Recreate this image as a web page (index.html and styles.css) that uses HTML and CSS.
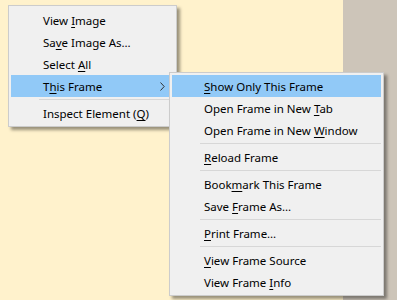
FILE: index.html
```html
<!DOCTYPE html>
<html lang="en">
<head>
  <meta charset="UTF-8">
  <meta name="viewport" content="width=device-width, initial-scale=1.0">
  <title>Context menu</title>
  <link rel="stylesheet" href="styles.css">
</head>
<body>
  <div class="page"></div>
  <div class="side"></div>

  <ul class="menu main-menu">
    <li class="item"><span class="label">View <u>I</u>mage</span></li>
    <li class="item"><span class="label">Sa<u>v</u>e Image As…</span></li>
    <li class="item"><span class="label">Select <u>A</u>ll</span></li>
    <li class="item active">
      <span class="label">T<u>h</u>is Frame</span>
      <svg class="arrow" width="5" height="9" viewBox="0 0 5 9"><path d="M0.5 0.5 L4.2 4.5 L0.5 8.5" fill="none" stroke="#333" stroke-width="1"/></svg>
    </li>
    <li class="sep"></li>
    <li class="item"><span class="label">Inspect Element (<u>Q</u>)</span></li>
  </ul>

  <ul class="menu sub-menu">
    <li class="item active"><span class="label"><u>S</u>how Only This Frame</span></li>
    <li class="item"><span class="label">Open Frame in New <u>T</u>ab</span></li>
    <li class="item"><span class="label">Open Frame in New <u>W</u>indow</span></li>
    <li class="sep"></li>
    <li class="item"><span class="label"><u>R</u>eload Frame</span></li>
    <li class="sep"></li>
    <li class="item"><span class="label">Book<u>m</u>ark This Frame</span></li>
    <li class="item"><span class="label">Save <u>F</u>rame As…</span></li>
    <li class="sep"></li>
    <li class="item"><span class="label"><u>P</u>rint Frame…</span></li>
    <li class="sep"></li>
    <li class="item"><span class="label"><u>V</u>iew Frame Source</span></li>
    <li class="item"><span class="label">View Frame <u>I</u>nfo</span></li>
  </ul>
</body>
</html>
```

FILE: styles.css
```css
html, body{
  margin: 0;
  height: 100%;
}

body{
  display: flex;
  height: 300px;
  overflow: hidden;
  font-family: "Noto Sans", "Open Sans", sans-serif;
  font-size: 11.5px;
  color: #000;
}

.page{
  width: 343px;
  background: #fff2cc;
}

.side{
  flex: 1;
  background: #cdc5b9;
}

.menu{
  position: absolute;
  margin: 0;
  padding: 2px;
  list-style: none;
  background: #f0f0f0;
  border: 1px solid #cccccc;
  box-shadow: 3px 3px 3px rgba(0, 0, 0, 0.4);
}

.main-menu{
  left: 8px;
  top: 5px;
  width: 163px;
  padding-top: 3px;
}

.sub-menu{
  left: 169px;
  top: 72px;
  width: 209px;
}

.menu .item{
  display: flex;
  align-items: center;
  height: 22px;
  padding-left: 32px;
  white-space: nowrap;
}

.menu .item .label{
  flex: 1;
}

.menu .item.active{
  background: #91c9f7;
}

.menu .arrow{
  margin-right: 9px;
}

.menu .sep{
  height: 1px;
  margin: 2px 0 2px 28px;
  background: #d7d7d7;
}

u{
  text-underline-offset: 2px;
}
```
